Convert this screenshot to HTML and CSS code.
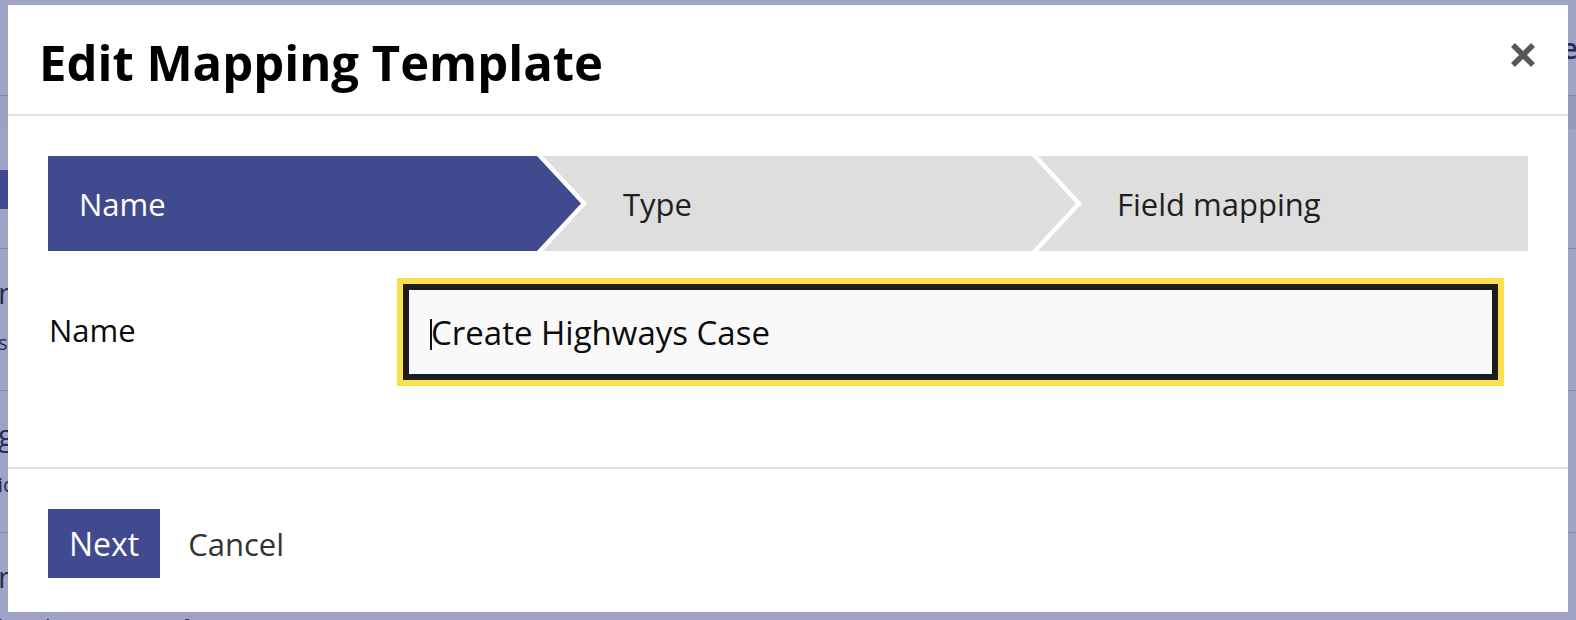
FILE: index.html
```html
<!DOCTYPE html>
<html lang="en">
<head>
<meta charset="utf-8">
<title>Edit Mapping Template</title>
<link rel="stylesheet" href="styles.css">
</head>
<body>
<div class="page">
  <header class="top">
    <span class="top-link">Profile</span>
  </header>
  <div class="subbar"></div>
  <div class="layout">
    <div class="tabs"><span class="tab active"></span></div>
    <ul class="list">
      <li class="row"><div class="row-title">n</div><div class="row-sub">st</div></li>
      <li class="row"><div class="row-title">g</div><div class="row-sub">ic</div></li>
      <li class="row"><div class="row-title">n</div><div class="row-sub">l Applications in Unif</div></li>
    </ul>
  </div>
</div>

<div class="overlay">
  <div class="modal" role="dialog" aria-labelledby="modal-title">
    <div class="modal-header">
      <h1 class="modal-title" id="modal-title">Edit Mapping Template</h1>
      <button class="close" aria-label="Close">
        <svg width="26" height="26" viewBox="0 0 26 26"><path d="M3 3 L23 23 M23 3 L3 23" stroke="#575757" stroke-width="5.5" fill="none"/></svg>
      </button>
    </div>
    <div class="modal-body">
      <ol class="steps">
        <li class="step step-first">Name</li>
        <li class="step step-mid">Type</li>
        <li class="step step-last">Field mapping</li>
      </ol>
      <div class="field">
        <label class="field-label">Name</label>
        <div class="input"><span class="caret"></span>Create Highways Case</div>
      </div>
    </div>
    <div class="modal-footer">
      <button class="btn-primary">Next</button>
      <button class="btn-link">Cancel</button>
    </div>
  </div>
</div>
</body>
</html>
```
FILE: styles.css
```css
* { box-sizing: border-box; }
html, body { margin: 0; padding: 0; }
body {
  width: 1576px;
  height: 620px;
  overflow: hidden;
  position: relative;
  font-family: "Open Sans", "Noto Sans", sans-serif;
  color: #0b0c0c;
}

/* underlying page */
.page {
  height: 620px;
  overflow: hidden;
  background: #fff;
  color: #0b0c0c;
}
.top {
  height: 96px;
  border-bottom: 1px solid #c8c8c8;
  display: flex;
  justify-content: flex-end;
  align-items: center;
  font-size: 28px;
  font-weight: 600;
}
.top-link { margin-right: -2px; }
.subbar {
  height: 33px;
  background: linear-gradient(to right, #fafafa 50%, #e8e8e8 50%);
}
.layout { padding-top: 41px; }
.tabs { height: 39px; }
.tab.active {
  display: inline-block;
  width: 40px;
  height: 39px;
  background: #404a8f;
}
.list {
  list-style: none;
  margin: 39px 0 0;
  padding: 0;
}
.row {
  height: 142px;
  border-top: 1px solid #c8c8c8;
  padding-top: 22px;
  margin-left: -2px;
}
.row:last-child { height: 90px; }
.row-title { font-size: 30px; line-height: 44px; }
.row-sub { font-size: 20px; line-height: 56px; }

/* modal */
.overlay {
  position: absolute;
  inset: 0;
  background: rgba(64, 74, 143, 0.5);
  display: flex;
  padding: 5px 8px 8px;
}
.modal {
  flex: 1;
  background: #fff;
  display: flex;
  flex-direction: column;
}
.modal-header {
  height: 111px;
  border-bottom: 2px solid #e2e2e2;
  display: flex;
  align-items: center;
  justify-content: space-between;
  padding: 0 32px 0 31px;
}
.modal-title {
  margin: 0;
  font-size: 49px;
  font-weight: 700;
  color: #000;
  margin-top: 4px;
}
.close {
  border: 0;
  background: none;
  padding: 0;
  width: 26px;
  height: 26px;
  margin-top: -10px;
  cursor: pointer;
}
.close svg { display: block; }

.modal-body {
  flex: 1;
  padding: 40px 40px 0 40px;
}
.steps {
  list-style: none;
  margin: 0;
  padding: 0;
  display: flex;
  height: 95px;
}
.step {
  height: 95px;
  display: flex;
  align-items: center;
  font-size: 31px;
  background: #dedede;
  color: #1f1f1f;
}
.step-first {
  width: 533px;
  padding-left: 31px;
  background: #404a8f;
  color: #fff;
  clip-path: polygon(0 0, calc(100% - 44px) 0, 100% 50%, calc(100% - 44px) 100%, 0 100%);
}
.step-mid {
  width: 533px;
  margin-left: -38px;
  padding-left: 80px;
  clip-path: polygon(0 0, calc(100% - 44px) 0, 100% 50%, calc(100% - 44px) 100%, 0 100%, 44px 50%);
}
.step-last {
  flex: 1;
  margin-left: -38px;
  padding-left: 79px;
  clip-path: polygon(0 0, 100% 0, 100% 100%, 0 100%, 44px 50%);
}

.field {
  display: grid;
  grid-template-columns: 355px 1095px;
  align-items: center;
  margin-top: 33px;
}
.field-label {
  font-size: 31px;
  color: #0b0c0c;
  padding-left: 1px;
  margin-top: -4px;
}
.input {
  height: 96px;
  border: 6px solid #1d1d1d;
  outline: 6px solid #fcdf4e;
  background: #f9f9f9;
  display: flex;
  align-items: center;
  padding-left: 21px;
  font-size: 33px;
  color: #0b0c0c;
}
.caret {
  display: inline-block;
  width: 2px;
  height: 31px;
  background: #111;
  margin-right: -1px;
  margin-top: 4px;
}

.modal-footer {
  border-top: 2px solid #e2e2e2;
  padding: 40px 40px 34px;
  display: flex;
  align-items: center;
  gap: 28px;
}
.btn-primary {
  height: 69px;
  padding: 0 21px;
  border: 0;
  background: #404a8f;
  color: #fff;
  font-family: inherit;
  font-size: 32px;
}
.btn-link {
  border: 0;
  background: none;
  padding: 0;
  font-family: inherit;
  font-size: 31px;
  color: #333;
}
```
